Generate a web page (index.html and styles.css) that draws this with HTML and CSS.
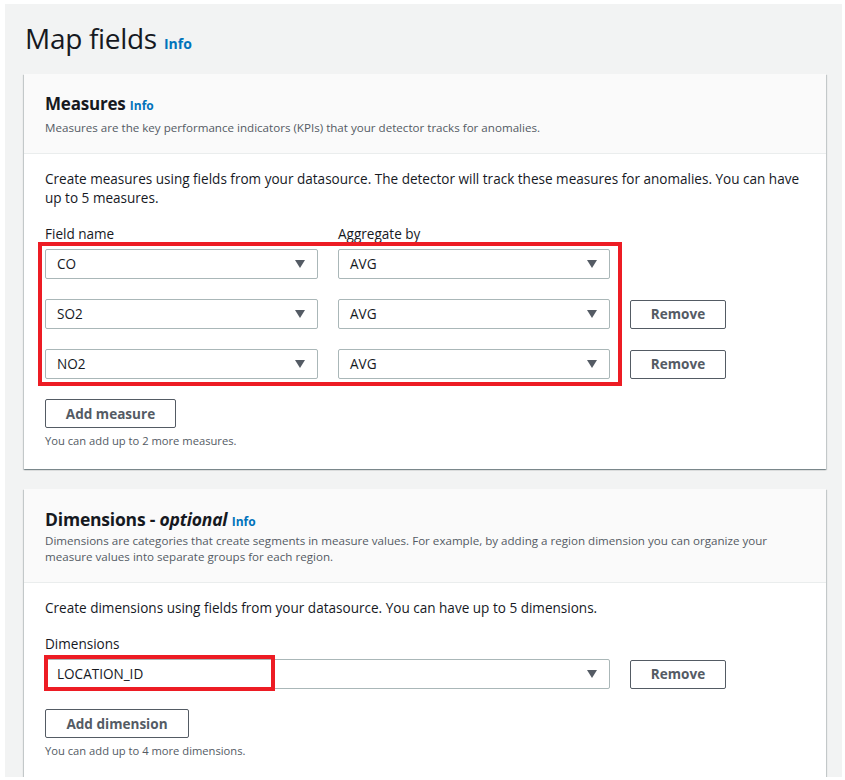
FILE: index.html
```html
<!DOCTYPE html>
<html>
<head>
<meta charset="utf-8">
<link rel="stylesheet" href="styles.css">
</head>
<body>
<div class="frame">
  <div class="page">
    <h1 class="title">Map fields <a class="info info-lg">Info</a></h1>

    <section class="card">
      <div class="card-head">
        <h2 class="card-title">Measures <a class="info">Info</a></h2>
        <p class="card-desc">Measures are the key performance indicators (KPIs) that your detector tracks for anomalies.</p>
      </div>
      <div class="card-body">
        <p class="intro">Create measures using fields from your datasource. The detector will track these measures for anomalies. You can have up to 5 measures.</p>
        <div class="grid-wrap">
          <div class="labels">
            <span class="label col-a">Field name</span>
            <span class="label col-b">Aggregate by</span>
          </div>
          <div class="row">
            <div class="select col-a"><span>CO</span><span class="caret"></span></div>
            <div class="select col-b"><span>AVG</span><span class="caret"></span></div>
          </div>
          <div class="row">
            <div class="select col-a"><span>SO2</span><span class="caret"></span></div>
            <div class="select col-b"><span>AVG</span><span class="caret"></span></div>
            <button class="btn btn-remove">Remove</button>
          </div>
          <div class="row">
            <div class="select col-a"><span>NO2</span><span class="caret"></span></div>
            <div class="select col-b"><span>AVG</span><span class="caret"></span></div>
            <button class="btn btn-remove">Remove</button>
          </div>
          <div class="highlight hl-measures"></div>
        </div>
        <button class="btn btn-add">Add measure</button>
        <p class="hint">You can add up to 2 more measures.</p>
      </div>
    </section>

    <section class="card card-dim">
      <div class="card-head">
        <h2 class="card-title">Dimensions - <em>optional</em> <a class="info">Info</a></h2>
        <p class="card-desc">Dimensions are categories that create segments in measure values. For example, by adding a region dimension you can organize your measure values into separate groups for each region.</p>
      </div>
      <div class="card-body">
        <p class="intro">Create dimensions using fields from your datasource. You can have up to 5 dimensions.</p>
        <div class="grid-wrap">
          <div class="labels">
            <span class="label">Dimensions</span>
          </div>
          <div class="row">
            <div class="select col-wide"><span>LOCATION_ID</span><span class="caret"></span></div>
            <button class="btn btn-remove">Remove</button>
          </div>
          <div class="highlight hl-dim"></div>
        </div>
        <button class="btn btn-add btn-add-dim">Add dimension</button>
        <p class="hint">You can add up to 4 more dimensions.</p>
      </div>
    </section>
  </div>
</div>
</body>
</html>
```

FILE: styles.css
```css
* { box-sizing: border-box; }
html, body { margin: 0; padding: 0; background: #fff; }
body {
  font-family: "Open Sans", "Noto Sans", sans-serif;
  color: #16191f;
  width: 845px;
  height: 780px;
  overflow: hidden;
}
.frame {
  padding: 4px 3px 3px 5px;
  height: 780px;
}
.page {
  background: #f2f3f3;
  height: 773px;
  padding: 14px 16px 0 19px;
  overflow: hidden;
}
.title {
  margin: 0 0 10px 0;
  font-size: 28px;
  font-weight: 400;
  line-height: 40px;
  letter-spacing: -0.3px;
  color: #16191f;
  padding-left: 1px;
}
.info {
  color: #0073bb;
  font-weight: 700;
  font-size: 12px;
  text-decoration: none;
  letter-spacing: 0;
}
.info-lg { font-size: 14px; }
.card {
  background: #fff;
  box-shadow: 0 1px 1px 0 rgba(0, 28, 36, 0.3), 1px 1px 1px 0 rgba(0, 28, 36, 0.15), -1px 1px 1px 0 rgba(0, 28, 36, 0.15);
  margin-bottom: 20px;
}
.card-head {
  background: #fafafa;
  border-bottom: 1px solid #eaeded;
  padding: 19px 20px 17px 21px;
}
.card-title {
  margin: 0;
  font-size: 17px;
  font-weight: 700;
  line-height: 22px;
  letter-spacing: -0.2px;
}
.card-dim .card-title { font-size: 17.5px; }
.card-title em { font-style: italic; font-weight: 700; }
.card-desc {
  margin: 3px 0 0 0;
  font-size: 11.6px;
  line-height: 16px;
  color: #545b64;
}
.card-dim .card-desc { margin-top: 0; }
.card-body {
  padding: 16px 20px 20px 21px;
}
.intro {
  margin: 0;
  font-size: 13.55px;
  line-height: 19px;
  color: #16191f;
}
.grid-wrap {
  position: relative;
  margin-top: 16px;
}
.labels {
  display: flex;
  gap: 20px;
  height: 20px;
  margin-bottom: 5px;
}
.label {
  font-size: 13.55px;
  line-height: 20px;
  color: #16191f;
}
.col-a { width: 273px; }
.col-b { width: 272px; }
.row {
  display: flex;
  gap: 20px;
  align-items: center;
  height: 30px;
  margin-bottom: 20px;
}
.select {
  height: 30px;
  border: 1px solid #aab7b8;
  border-radius: 2px;
  background: #fff;
  display: flex;
  align-items: center;
  justify-content: space-between;
  padding: 0 12px 0 11px;
  font-size: 13.55px;
  color: #16191f;
}
.col-wide { width: 565px; }
.caret {
  width: 0;
  height: 0;
  border-left: 5.5px solid transparent;
  border-right: 5.5px solid transparent;
  border-top: 8px solid #545b64;
}
.btn {
  font-family: inherit;
  background: #fff;
  border: 1px solid #545b64;
  border-radius: 2px;
  color: #545b64;
  font-weight: 700;
  font-size: 13.55px;
  height: 29px;
  padding: 0 20px;
  cursor: pointer;
}
.btn-remove { width: 96px; padding: 0; }
.btn-add {
  display: block;
  width: 131px;
  padding: 0;
}
.btn-add-dim { width: 144px; }
.hint {
  margin: 5px 0 0 0;
  font-size: 11.2px;
  line-height: 16px;
  color: #545b64;
}
.highlight {
  position: absolute;
  border: 4px solid #ed1c24;
  pointer-events: none;
}
.hl-measures {
  left: -7px;
  top: 18px;
  width: 584px;
  height: 144px;
}
.hl-dim {
  left: -1px;
  top: 21px;
  width: 231px;
  height: 36px;
}
```
